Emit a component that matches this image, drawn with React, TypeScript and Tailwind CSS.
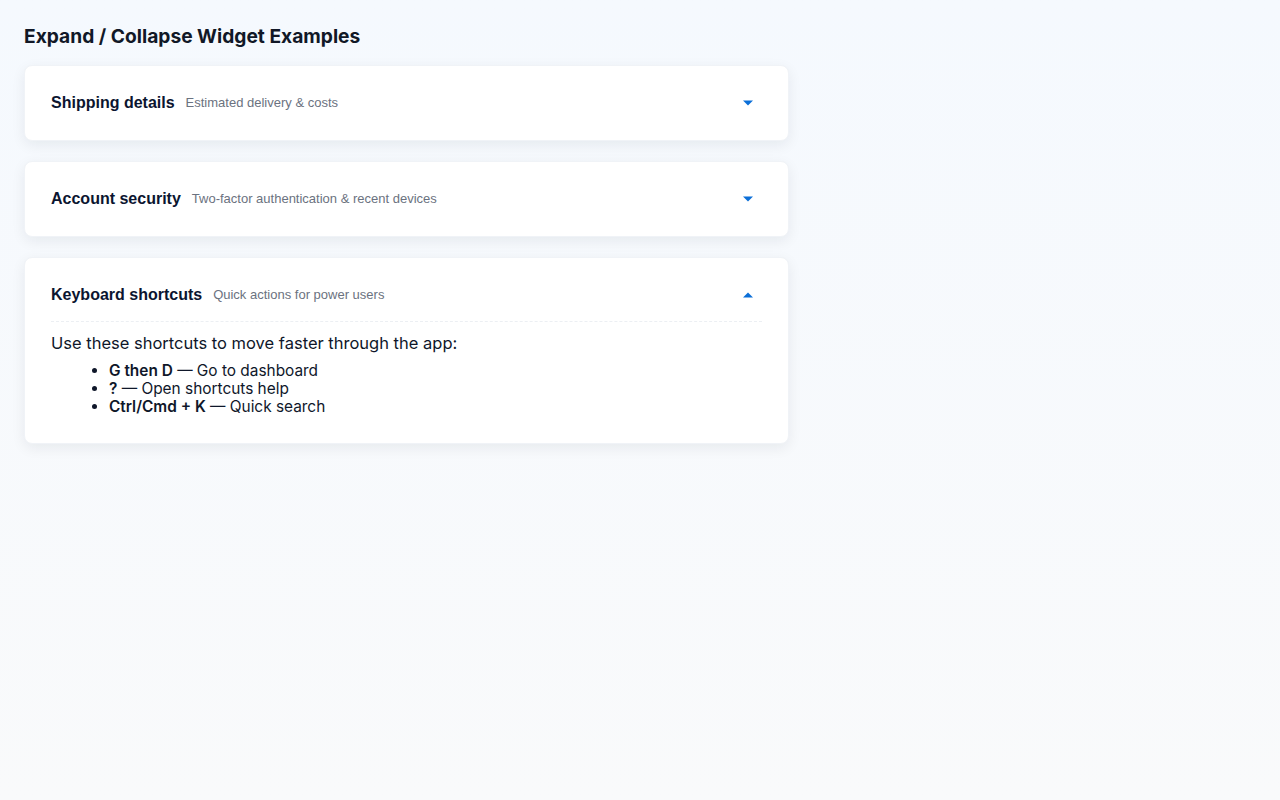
import React, { useState } from 'react';

interface Section {
  id: string;
  title: string;
  subtitle: string;
}

const sections: Section[] = [
  { id: 'shipping', title: 'Shipping details', subtitle: 'Estimated delivery & costs' },
  { id: 'security', title: 'Account security', subtitle: 'Two-factor authentication & recent devices' },
  { id: 'shortcuts', title: 'Keyboard shortcuts', subtitle: 'Quick actions for power users' },
];

const Caret = ({ open }: { open: boolean }) => (
  <svg width="10" height="6" viewBox="0 0 10 6" className="block">
    {open ? <path d="M0 5.5 L5 0.5 L10 5.5 Z" fill="#0b6fd8" /> : <path d="M0 0.5 L10 0.5 L5 5.5 Z" fill="#0b6fd8" />}
  </svg>
);

const ShortcutsBody = () => (
  <div className="pt-[9px] pb-[27px] text-[#0f172a] font-['Inter',sans-serif]">
    <p className="text-[16.5px] leading-6">Use these shortcuts to move faster through the app:</p>
    <ul className="list-disc pl-[58px] mt-[7px] text-[15.4px] leading-[18px]">
      <li><strong className="font-semibold">G then D</strong> — Go to dashboard</li>
      <li><strong className="font-semibold">?</strong> — Open shortcuts help</li>
      <li><strong className="font-semibold">Ctrl/Cmd + K</strong> — Quick search</li>
    </ul>
  </div>
);

export default function App() {
  const [open, setOpen] = useState<Record<string, boolean>>({ shortcuts: true });

  return (
    <div className="min-h-screen bg-linear-to-b from-[#f5f9fe] to-[#f9fafb] px-6 pt-[22px] font-['Inter',sans-serif]">
      <h1 className="text-[19.2px] leading-7 font-bold text-[#111827] mb-[15px]">Expand / Collapse Widget Examples</h1>
      <div className="w-[765px] flex flex-col gap-5">
        {sections.map((s) => {
          const isOpen = !!open[s.id];
          return (
            <div
              key={s.id}
              className="bg-white rounded-lg border border-[#f0f3f7] shadow-[0_4px_14px_rgba(15,23,42,0.07)] px-[26px]"
            >
              <button
                onClick={() => setOpen({ ...open, [s.id]: !isOpen })}
                className={`w-full flex items-center text-left py-[25px] font-['Liberation_Sans',Arial,sans-serif] ${isOpen ? 'border-b border-dashed border-[#eceff3] pb-[14px]' : ''}`}
              >
                <span className="text-[16px] leading-6 font-bold text-[#0b1530]">{s.title}</span>
                <span className="ml-[11px] text-[13px] text-[#6b7280]">{s.subtitle}</span>
                <span className="ml-auto mr-[9px]">
                  <Caret open={isOpen} />
                </span>
              </button>
              {isOpen && s.id === 'shortcuts' && <ShortcutsBody />}
              {isOpen && s.id !== 'shortcuts' && (
                <div className="pt-[9px] pb-[27px] text-[16px] text-[#0f172a]">Details go here.</div>
              )}
            </div>
          );
        })}
      </div>
    </div>
  );
}
